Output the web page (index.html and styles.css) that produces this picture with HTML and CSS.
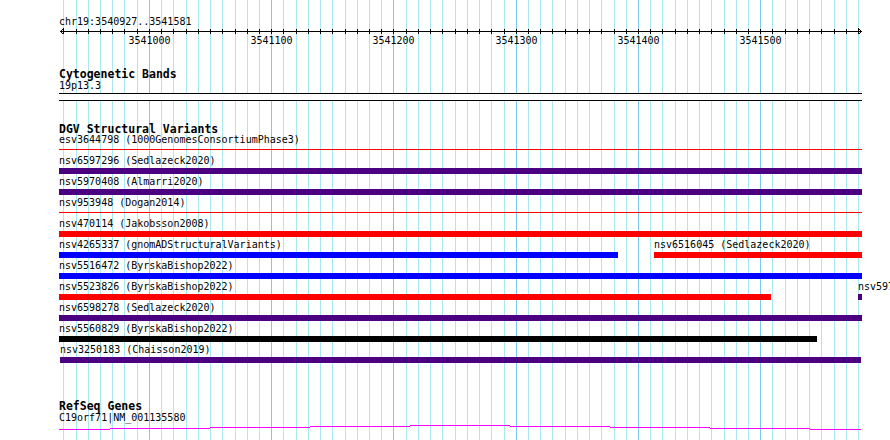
FILE: index.html
```html
<!DOCTYPE html>
<html>

<head>
    <title>chr19:3540927-3541581</title>
    <meta charset="utf-8">
    <link rel="stylesheet" href="styles.css">
</head>

<body>
    <div class="navegador">
        <!-- lineas de la rejilla, cada 10 bases -->
        <svg class="rejilla" width="890" height="440">
            <rect class="menor" x="63" y="0" width="1" height="440" />
            <rect class="menor" x="76" y="0" width="1" height="440" />
            <rect class="menor" x="88" y="0" width="1" height="440" />
            <rect class="menor" x="100" y="0" width="1" height="440" />
            <rect class="menor" x="112" y="0" width="1" height="440" />
            <rect class="menor" x="124" y="0" width="1" height="440" />
            <rect class="menor" x="137" y="0" width="1" height="440" />
            <rect class="mayor" x="149" y="0" width="1" height="440" />
            <rect class="menor" x="161" y="0" width="1" height="440" />
            <rect class="menor" x="173" y="0" width="1" height="440" />
            <rect class="menor" x="186" y="0" width="1" height="440" />
            <rect class="menor" x="198" y="0" width="1" height="440" />
            <rect class="menor" x="210" y="0" width="1" height="440" />
            <rect class="menor" x="222" y="0" width="1" height="440" />
            <rect class="menor" x="235" y="0" width="1" height="440" />
            <rect class="menor" x="247" y="0" width="1" height="440" />
            <rect class="menor" x="259" y="0" width="1" height="440" />
            <rect class="mayor" x="271" y="0" width="1" height="440" />
            <rect class="menor" x="283" y="0" width="1" height="440" />
            <rect class="menor" x="296" y="0" width="1" height="440" />
            <rect class="menor" x="308" y="0" width="1" height="440" />
            <rect class="menor" x="320" y="0" width="1" height="440" />
            <rect class="menor" x="332" y="0" width="1" height="440" />
            <rect class="menor" x="345" y="0" width="1" height="440" />
            <rect class="menor" x="357" y="0" width="1" height="440" />
            <rect class="menor" x="369" y="0" width="1" height="440" />
            <rect class="menor" x="381" y="0" width="1" height="440" />
            <rect class="mayor" x="393" y="0" width="1" height="440" />
            <rect class="menor" x="406" y="0" width="1" height="440" />
            <rect class="menor" x="418" y="0" width="1" height="440" />
            <rect class="menor" x="430" y="0" width="1" height="440" />
            <rect class="menor" x="442" y="0" width="1" height="440" />
            <rect class="menor" x="455" y="0" width="1" height="440" />
            <rect class="menor" x="467" y="0" width="1" height="440" />
            <rect class="menor" x="479" y="0" width="1" height="440" />
            <rect class="menor" x="491" y="0" width="1" height="440" />
            <rect class="menor" x="504" y="0" width="1" height="440" />
            <rect class="mayor" x="516" y="0" width="1" height="440" />
            <rect class="menor" x="528" y="0" width="1" height="440" />
            <rect class="menor" x="540" y="0" width="1" height="440" />
            <rect class="menor" x="552" y="0" width="1" height="440" />
            <rect class="menor" x="565" y="0" width="1" height="440" />
            <rect class="menor" x="577" y="0" width="1" height="440" />
            <rect class="menor" x="589" y="0" width="1" height="440" />
            <rect class="menor" x="601" y="0" width="1" height="440" />
            <rect class="menor" x="614" y="0" width="1" height="440" />
            <rect class="menor" x="626" y="0" width="1" height="440" />
            <rect class="mayor" x="638" y="0" width="1" height="440" />
            <rect class="menor" x="650" y="0" width="1" height="440" />
            <rect class="menor" x="662" y="0" width="1" height="440" />
            <rect class="menor" x="675" y="0" width="1" height="440" />
            <rect class="menor" x="687" y="0" width="1" height="440" />
            <rect class="menor" x="699" y="0" width="1" height="440" />
            <rect class="menor" x="711" y="0" width="1" height="440" />
            <rect class="menor" x="724" y="0" width="1" height="440" />
            <rect class="menor" x="736" y="0" width="1" height="440" />
            <rect class="menor" x="748" y="0" width="1" height="440" />
            <rect class="mayor" x="760" y="0" width="1" height="440" />
            <rect class="menor" x="772" y="0" width="1" height="440" />
            <rect class="menor" x="785" y="0" width="1" height="440" />
            <rect class="menor" x="797" y="0" width="1" height="440" />
            <rect class="menor" x="809" y="0" width="1" height="440" />
            <rect class="menor" x="821" y="0" width="1" height="440" />
            <rect class="menor" x="834" y="0" width="1" height="440" />
            <rect class="menor" x="846" y="0" width="1" height="440" />
            <rect class="menor" x="858" y="0" width="1" height="440" />
        </svg>

        <!-- regla con la posicion -->
        <svg class="regla" width="890" height="48">
            <text x="59" y="25">chr19:3540927..3541581</text>
            <rect x="60" y="31" width="802" height="1" />
            <polyline points="63.5,28.5 60.5,31.5 63.5,34.5" />
            <polyline points="858.5,28.5 861.5,31.5 858.5,34.5" />
            <g class="marcas">
                <rect x="63" y="29" /><rect x="76" y="29" /><rect x="88" y="29" /><rect x="100" y="29" />
                <rect x="112" y="29" /><rect x="124" y="29" /><rect x="137" y="29" /><rect x="149" y="29" />
                <rect x="161" y="29" /><rect x="173" y="29" /><rect x="186" y="29" /><rect x="198" y="29" />
                <rect x="210" y="29" /><rect x="222" y="29" /><rect x="235" y="29" /><rect x="247" y="29" />
                <rect x="259" y="29" /><rect x="271" y="29" /><rect x="283" y="29" /><rect x="296" y="29" />
                <rect x="308" y="29" /><rect x="320" y="29" /><rect x="332" y="29" /><rect x="345" y="29" />
                <rect x="357" y="29" /><rect x="369" y="29" /><rect x="381" y="29" /><rect x="393" y="29" />
                <rect x="406" y="29" /><rect x="418" y="29" /><rect x="430" y="29" /><rect x="442" y="29" />
                <rect x="455" y="29" /><rect x="467" y="29" /><rect x="479" y="29" /><rect x="491" y="29" />
                <rect x="504" y="29" /><rect x="516" y="29" /><rect x="528" y="29" /><rect x="540" y="29" />
                <rect x="552" y="29" /><rect x="565" y="29" /><rect x="577" y="29" /><rect x="589" y="29" />
                <rect x="601" y="29" /><rect x="614" y="29" /><rect x="626" y="29" /><rect x="638" y="29" />
                <rect x="650" y="29" /><rect x="662" y="29" /><rect x="675" y="29" /><rect x="687" y="29" />
                <rect x="699" y="29" /><rect x="711" y="29" /><rect x="724" y="29" /><rect x="736" y="29" />
                <rect x="748" y="29" /><rect x="760" y="29" /><rect x="772" y="29" /><rect x="785" y="29" />
                <rect x="797" y="29" /><rect x="809" y="29" /><rect x="821" y="29" /><rect x="834" y="29" />
                <rect x="846" y="29" /><rect x="858" y="29" />
            </g>
            <g class="cifras">
                <text x="149.5" y="44">3541000</text>
                <text x="271.5" y="44">3541100</text>
                <text x="393.5" y="44">3541200</text>
                <text x="516.5" y="44">3541300</text>
                <text x="638.5" y="44">3541400</text>
                <text x="760.5" y="44">3541500</text>
            </g>
        </svg>

        <h4 class="titulo bandas">Cytogenetic Bands</h4>
        <div class="nombre">19p13.3</div>
        <div class="cromosoma"></div>

        <h4 class="titulo variantes">DGV Structural Variants</h4>
        <div class="pista">
            <div class="fila">
                <div class="rasgo" style="width:803px"><span class="etiqueta">esv3644798 (1000GenomesConsortiumPhase3)</span><div class="linea roja"></div></div>
            </div>
            <div class="fila">
                <div class="rasgo" style="width:803px"><span class="etiqueta">nsv6597296 (Sedlazeck2020)</span><div class="barra morada"></div></div>
            </div>
            <div class="fila">
                <div class="rasgo" style="width:803px"><span class="etiqueta">nsv5970408 (Almarri2020)</span><div class="barra morada"></div></div>
            </div>
            <div class="fila">
                <div class="rasgo" style="width:803px"><span class="etiqueta">nsv953948 (Dogan2014)</span><div class="linea roja"></div></div>
            </div>
            <div class="fila">
                <div class="rasgo" style="width:803px"><span class="etiqueta">nsv470114 (Jakobsson2008)</span><div class="barra roja"></div></div>
            </div>
            <div class="fila">
                <div class="rasgo" style="width:559px"><span class="etiqueta">nsv4265337 (gnomADStructuralVariants)</span><div class="barra azul"></div></div>
                <div class="rasgo" style="margin-left:36px;width:208px"><span class="etiqueta">nsv6516045 (Sedlazeck2020)</span><div class="barra roja"></div></div>
            </div>
            <div class="fila">
                <div class="rasgo" style="width:803px"><span class="etiqueta">nsv5516472 (ByrskaBishop2022)</span><div class="barra azul"></div></div>
            </div>
            <div class="fila">
                <div class="rasgo" style="width:712px"><span class="etiqueta">nsv5523826 (ByrskaBishop2022)</span><div class="barra roja"></div></div>
                <div class="rasgo" style="margin-left:87px;width:4px"><span class="etiqueta">nsv5971386 (Almarri2020)</span><div class="barra morada"></div></div>
            </div>
            <div class="fila">
                <div class="rasgo" style="width:803px"><span class="etiqueta">nsv6598278 (Sedlazeck2020)</span><div class="barra morada"></div></div>
            </div>
            <div class="fila">
                <div class="rasgo" style="width:758px"><span class="etiqueta">nsv5560829 (ByrskaBishop2022)</span><div class="barra negra"></div></div>
            </div>
            <div class="fila">
                <div class="rasgo" style="margin-left:1px;width:801px"><span class="etiqueta">nsv3250183 (Chaisson2019)</span><div class="barra morada"></div></div>
            </div>
        </div>

        <h4 class="titulo genes">RefSeq Genes</h4>
        <div class="nombre">C19orf71|NM_001135580</div>
        <svg class="gen" width="890" height="5">
            <rect x="59" y="4" width="51" height="1" />
            <rect x="110" y="3" width="100" height="1" />
            <rect x="210" y="2" width="100" height="1" />
            <rect x="310" y="1" width="100" height="1" />
            <rect x="410" y="0" width="100" height="1" />
            <rect x="510" y="1" width="100" height="1" />
            <rect x="610" y="2" width="100" height="1" />
            <rect x="710" y="3" width="100" height="1" />
            <rect x="810" y="4" width="51" height="1" />
        </svg>
    </div>
</body>

</html>
```

FILE: styles.css
```css
html,
body {
    margin: 0;
    overflow: hidden;
    background-color: #fff;
}

body {
    font-family: "DejaVu Sans Mono", monospace;
    font-size: 10px;
    color: #000;
}

.navegador {
    position: relative;
    z-index: 0;
    width: 890px;
    height: 440px;
    overflow: hidden;
    background-color: #fff;
}

/* rejilla de fondo */
.rejilla {
    position: absolute;
    left: 0;
    top: 0;
    z-index: -1;
    shape-rendering: crispEdges;
}

.rejilla .menor {
    fill: #a9e9ef;
}

.rejilla .mayor {
    fill: #80c9ee;
}

/* regla */
.regla {
    display: block;
    shape-rendering: crispEdges;
}

.regla text {
    font-family: "DejaVu Sans Mono", monospace;
    font-size: 10px;
    fill: #000;
}

.regla rect {
    fill: #000;
}

.regla polyline {
    fill: none;
    stroke: #000;
    stroke-width: 1;
}

.marcas rect {
    width: 1px;
    height: 5px;
}

.cifras text {
    text-anchor: middle;
}

/* titulos de pistas */
.titulo {
    margin: 0 0 0 59px;
    height: 12px;
    font-family: "DejaVu Sans Mono", monospace;
    font-size: 11.5px;
    font-weight: bold;
    line-height: 12px;
    white-space: nowrap;
}

.bandas {
    margin-top: 20px;
}

.variantes {
    margin-top: 22px;
}

.genes {
    margin-top: 34px;
}

.nombre {
    margin-left: 59px;
    height: 11px;
    line-height: 11px;
    white-space: nowrap;
}

.cromosoma {
    margin: 2px 0 0 59px;
    width: 803px;
    height: 6px;
    border-top: 1px solid #000;
    border-bottom: 1px solid #000;
    background-color: #fff;
}

/* variantes estructurales */
.pista {
    margin-left: 59px;
    width: 803px;
}

.fila {
    display: flex;
    height: 21px;
}

.rasgo {
    display: flex;
    flex-direction: column;
    flex: none;
    min-width: 0;
}

.etiqueta {
    display: block;
    height: 9px;
    line-height: 9px;
    margin-bottom: 3px;
    white-space: nowrap;
}

.barra {
    height: 6px;
}

.linea {
    height: 1px;
    margin: 2px 0 3px;
}

.roja {
    background-color: #ff0000;
}

.azul {
    background-color: #0000ff;
}

.morada {
    background-color: #4b0082;
}

.negra {
    background-color: #000;
}

/* gen */
.gen {
    display: block;
    margin-top: 2px;
    shape-rendering: crispEdges;
}

.gen rect {
    fill: #ff00ff;
}
```
